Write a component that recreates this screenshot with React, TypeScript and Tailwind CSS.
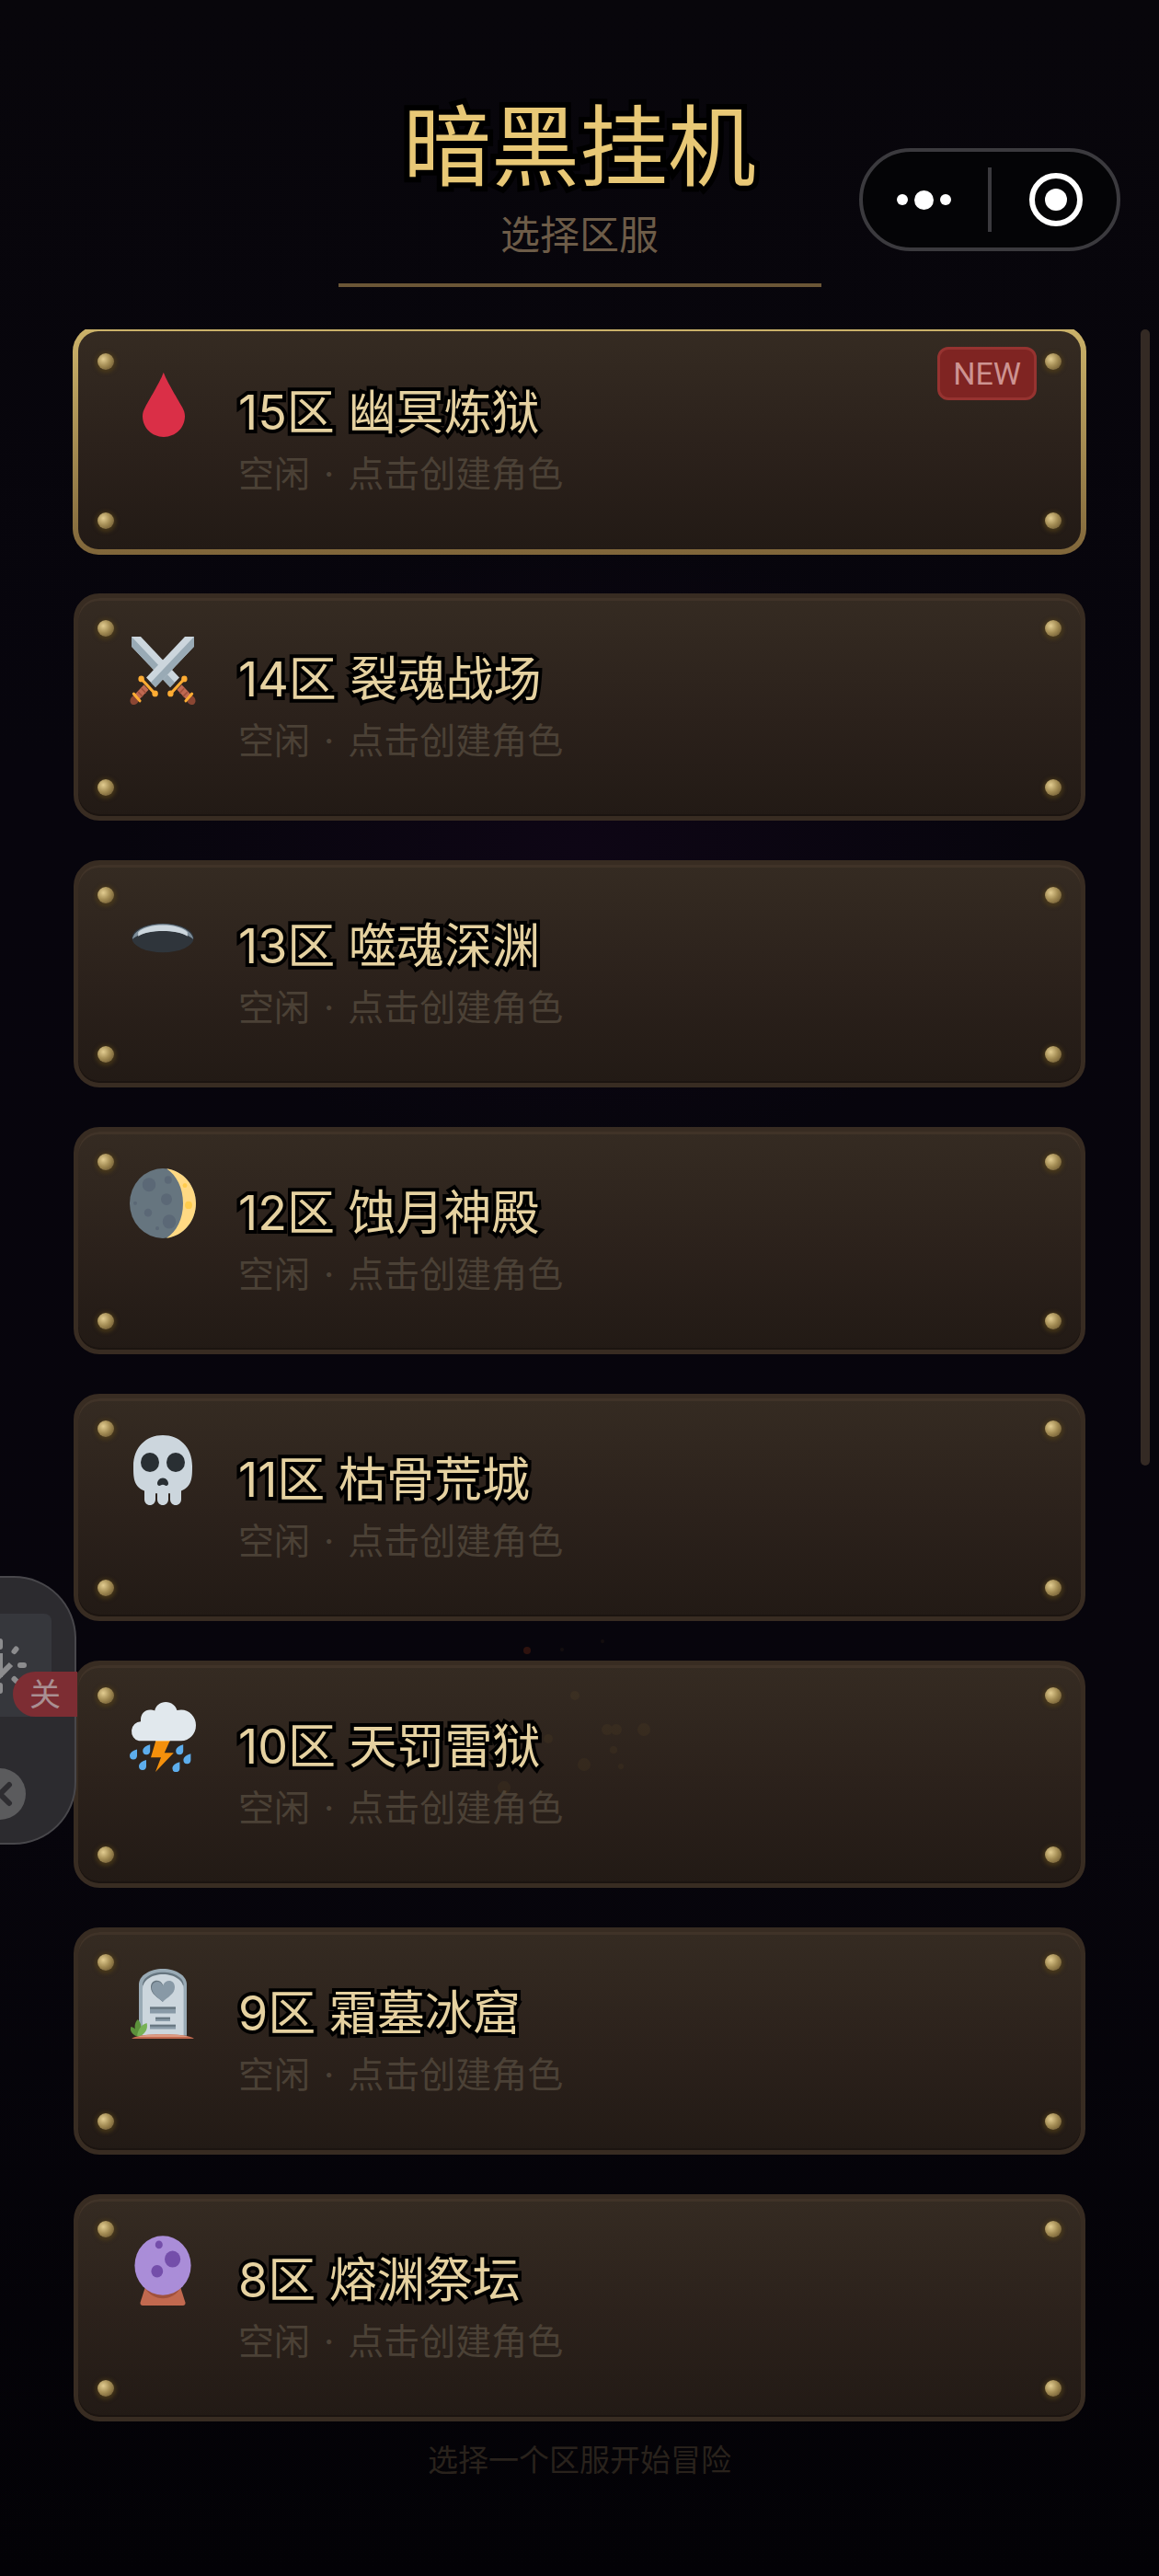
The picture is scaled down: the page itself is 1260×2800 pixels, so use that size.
import type { ReactNode } from "react";

function Emoji({ children }: { children: ReactNode }) {
  return (
    <svg
      viewBox="0 0 36 36"
      preserveAspectRatio="none"
      aria-hidden="true"
      className="mt-[40px] h-[76px] w-[72px] shrink-0"
    >
      {children}
    </svg>
  );
}

function BloodDrop() {
  return (
    <Emoji>
      <path
        fill="#DA2F47"
        d="M18.4 2.2C17.2 5.8 11.4 15 8.4 20.2 7.5 21.8 7 23.2 7 24.8c0 6 5 10.7 11.5 10.7S30 30.8 30 24.8c0-1.6-.5-3-1.4-4.6C25.5 15 19.6 5.8 18.4 2.2z"
      />
    </Emoji>
  );
}

function Swords() {
  return (
    <Emoji>
      <path fill="#CCD6DD" d="M1 1h5l21 21-5 5L1 6z" />
      <path fill="#99AAB5" d="M1 1v5l21 21 2.5-2.5z" />
      <path stroke="#BF6952" strokeWidth="3.6" d="M27 27l5.5 5.5" />
      <path stroke="#A0513C" strokeWidth=".8" d="M27.2 30l2.4-2.4M29 31.8l2.4-2.4" />
      <ellipse cx="33.4" cy="33.6" rx="2.2" ry="2.6" fill="#8A4633" transform="rotate(-40 33.4 33.6)" />
      <path stroke="#FFAC33" strokeWidth="1.5" strokeLinecap="round" d="M30.5 34l3.3-3.6M22.3 30.3l7.4-7.6" />
      <circle cx="22.2" cy="30.3" r="1.6" fill="#FFAC33" />
      <circle cx="29.7" cy="22.7" r="1.6" fill="#FFAC33" />
      <path fill="#CCD6DD" d="M35 1h-5L9 22l5 5L35 6z" />
      <path fill="#99AAB5" d="M35 1v5L14 27l-2.5-2.5z" />
      <path stroke="#BF6952" strokeWidth="3.6" d="M9 27l-5.5 5.5" />
      <path stroke="#A0513C" strokeWidth=".8" d="M8.8 30l-2.4-2.4M7 31.8l-2.4-2.4" />
      <ellipse cx="2.6" cy="33.6" rx="2.2" ry="2.6" fill="#8A4633" transform="rotate(40 2.6 33.6)" />
      <path stroke="#FFAC33" strokeWidth="1.5" strokeLinecap="round" d="M5.5 34l-3.3-3.6M13.7 30.3L6.3 22.7" />
      <circle cx="13.8" cy="30.3" r="1.6" fill="#FFAC33" />
      <circle cx="6.3" cy="22.7" r="1.6" fill="#FFAC33" />
    </Emoji>
  );
}

function Hole() {
  return (
    <Emoji>
      <ellipse cx="18" cy="18.7" rx="16.8" ry="7.5" fill="#2F353B" />
      <path fill="#7D8D99" d="M1.4 19.4C2 14.8 9.500 11.500 18 11.500s16 3.300 16.600 7.900C31 16.400 25 15.200 18 15.200S5 16.400 1.400 19.400z" />
      <path fill="#CCD6DD" d="M4.600 17.900v-2.200C7.500 13.300 12.300 12.100 18 12.100s10.500 1.200 13.400 3.600v2.200C28 15.900 23.300 15.200 18 15.200S8 15.900 4.600 17.900z" />
    </Emoji>
  );
}

function Moon() {
  return (
    <Emoji>
      <circle cx="18" cy="18" r="18" fill="#66757F" />
      <path fill="#FFD983" d="M20 .1C29.1 1.2 36 8.8 36 18s-6.9 16.8-16 17.9C25.5 32.5 29 26 29 18S25.5 3.5 20 .1z" />
      <g fill="#5B6876">
        <circle cx="10.5" cy="8.4" r="3.6" />
        <circle cx="20.9" cy="5.9" r="2" />
        <circle cx="20" cy="15.9" r="3" />
        <circle cx="3" cy="17.9" r="1" />
        <circle cx="10" cy="22.8" r="2.1" />
        <circle cx="21.5" cy="27.4" r="3.6" />
        <circle cx="15" cy="30.9" r="1" />
      </g>
      <circle cx="30" cy="8.8" r="1.2" fill="#FFCC4D" />
      <circle cx="32" cy="18.9" r="2" fill="#FFCC4D" />
    </Emoji>
  );
}

function Skull() {
  return (
    <Emoji>
      <path
        fill="#CCD6DD"
        d="M34 16C34 6 26.837 0 18 0 9.164 0 2 6 2 16c0 5.574.002 10.388 6 12.64V33c0 1.657 1.343 3 3 3s3-1.343 3-3v-3h1v3c0 1.657 1.344 3 3 3 1.657 0 3-1.343 3-3v-3h1v3c0 1.657 1.344 3 3 3 1.657 0 3-1.343 3-3v-4.36c5.998-2.252 6-7.066 6-12.64z"
      />
      <circle cx="11" cy="14" r="5" fill="#292F33" />
      <circle cx="25" cy="14" r="5" fill="#292F33" />
      <path fill="#292F33" d="M18 22c-1.9 0-3 1.5-3 2.9 0 .7.5 1.1 1.1 1.1.7 0 1.1-.5 1.9-.5s1.2.5 1.9.5c.6 0 1.1-.4 1.1-1.1 0-1.4-1.1-2.9-3-2.9z" />
    </Emoji>
  );
}

const rain = [
  "translate(2 27)",
  "translate(9.1 24.5)",
  "translate(7 32.5)",
  "translate(27.1 24.5)",
  "translate(31.2 29.3)",
  "translate(25.2 33.5)",
];

function Storm() {
  return (
    <Emoji>
      <path fill="#F4900C" d="M14.5 19L11.5 28.5H17L14 36l9.9-9.8h-5L22.3 19z" />
      <path fill="#FFAC33" d="M14.5 19l-.4 1.3h7.6l.6-1.3z" />
      <path
        fill="#E1E8ED"
        d="M28 4c-.8 0-1.6.1-2.3.3C25.1 1.9 22.6 0 19.6 0c-3 0-5.5 1.900-6 4.500C13 4.200 12 4 11 4 8.200 4 6 6.200 6 9v1.100A5 5 0 0 0 5 20h23a8 8 0 0 0 0-16z"
      />
      {rain.map((place) => (
        <path key={place} fill="#5DADEC" transform={place} d="M2-2.600C0-2.200-2-.9-2 .7A2 2 0 0 0 0 2.600C1.200 2.600 2 1.800 2 .7z" />
      ))}
    </Emoji>
  );
}

function Tombstone() {
  return (
    <Emoji>
      <path fill="#99AAB5" d="M5 8c0-4.5 6-8 13-8s13 3.5 13 8v26.5H5z" />
      <path fill="#66757F" d="M7 8.5C7 4.5 12 1.8 18.1 1.8S29.3 4.5 29.3 8.5z" />
      <path fill="#CCD6DD" d="M7 10.5C7 6 12 2.9 18.1 2.9S29.3 6 29.3 10.5v24H7z" />
      <path fill="#66757F" d="M18 8.2c-1.5-3.2-6.5-2.8-6.5 1.3C11.5 13 15.5 15 18 17z" />
      <path fill="#8899A6" d="M18 8.7c1.5-3.7 6.5-3.3 6.5.8 0 3.5-4 5.2-6.5 7.5-2.3-2-5.6-3.8-6-6.8-.4-3.8 4.5-5 6-1.5z" />
      <path fill="#8899A6" d="M11 19.7h14V23H11zM14 25h8v2h-8zM11 28.8h14V31H11z" />
      <path fill="#66757F" d="M11 19.7h14v1H11zM14 25h8v.9h-8zM11 28.8h14v.9H11z" />
      <path fill="#C1694F" d="M1 36c2-1.6 9-2.2 17-2.2s15 .6 17 2.2z" />
      <path fill="#DD9B83" d="M4 35c3-.9 8-1.2 14-1.2s11 .3 14 1.2z" />
      <path fill="#5C913B" d="M4 34.8C.8 33.5 0 31.5.7 29.8c1.3.3 1.9.7 2.3 1.3-.6-2 .2-4 1.4-5.1C6 27.5 6.5 29.5 6.2 31z" />
      <path fill="#77B255" d="M4 34.8c.3-3.5 2.5-6.2 5.3-6.8.9 3.2-1.4 6.6-5.3 6.8z" />
    </Emoji>
  );
}

function CrystalBall() {
  return (
    <Emoji>
      <path fill="#C1694F" d="M8.6 26L5.8 34.3C5.5 35.3 6.2 36 7 36h22c.8 0 1.5-.7 1.2-1.7L27.4 26z" />
      <path fill="#A0513C" d="M8.3 27C10.5 30.5 14 32.3 18 32.3s7.5-1.8 9.7-5.3l-.6-1.5H8.8z" />
      <circle cx="18" cy="15.4" r="15.3" fill="#AA8DD8" />
      <ellipse cx="15.9" cy="4.7" rx="2" ry="2.1" fill="#744EAA" />
      <circle cx="23.3" cy="12.1" r="4.3" fill="#744EAA" />
      <circle cx="14.9" cy="18.4" r="3.2" fill="#744EAA" />
    </Emoji>
  );
}

const servers = [
  { id: 15, name: "幽冥炼狱", icon: <BloodDrop />, fresh: true },
  { id: 14, name: "裂魂战场", icon: <Swords /> },
  { id: 13, name: "噬魂深渊", icon: <Hole /> },
  { id: 12, name: "蚀月神殿", icon: <Moon /> },
  { id: 11, name: "枯骨荒城", icon: <Skull /> },
  { id: 10, name: "天罚雷狱", icon: <Storm /> },
  { id: 9, name: "霜墓冰窟", icon: <Tombstone /> },
  { id: 8, name: "熔渊祭坛", icon: <CrystalBall /> },
];

const rivet =
  "absolute size-[18px] rounded-full bg-[radial-gradient(circle_at_35%_35%,#e2cc90_0%,#a48d55_45%,#5c4826_100%)] shadow-[0_1px_4px_2px_rgba(82,64,24,0.7)]";

function Rivets() {
  return (
    <>
      <span className={`${rivet} left-[21px] top-[24px]`} />
      <span className={`${rivet} right-[21px] top-[24px]`} />
      <span className={`${rivet} bottom-[22px] left-[21px]`} />
      <span className={`${rivet} bottom-[22px] right-[21px]`} />
    </>
  );
}

const plain =
  "border-[#382c22] [background:linear-gradient(#352b22,#2b211b_55%,#221a15)_padding-box,#382c22_border-box] shadow-[inset_0_3px_0_#403328,inset_0_-2px_0_#1b1410]";
const featured =
  "border-transparent [background:linear-gradient(#352b22,#2b211b_55%,#221a15)_padding-box,linear-gradient(#ccb36a,#80663a)_border-box]";

function ServerCard({ server }: { server: (typeof servers)[number] }) {
  return (
    <button
      type="button"
      className={`relative flex w-full items-start rounded-[28px] pb-[58px] pl-[56px] text-left ${
        server.fresh ? `border-[6px] ${featured}` : `border-[5px] ${plain}`
      }`}
    >
      <Rivets />
      {server.icon}
      <span className="ml-[46px] flex flex-col gap-[10px] pt-[57px]">
        <span className="text-[52px] leading-[64px] text-[#e5d1a0] [-webkit-text-stroke:8px_#000] [paint-order:stroke_fill]">
          {server.id}区 {server.name}
        </span>
        <span className="text-[39px] leading-[48px] text-[#4b4136]">
          空闲 <span className="mx-1">·</span> 点击创建角色
        </span>
      </span>
      {server.fresh && (
        <span className="absolute right-[48px] top-[17px] flex h-[58px] w-[108px] items-center justify-center rounded-[12px] border-[3px] border-[#963330] bg-[#7f2422] font-['Roboto',sans-serif] text-[34px] text-[#cd9391]">
          NEW
        </span>
      )}
    </button>
  );
}

function Capsule() {
  return (
    <div className="absolute right-[42px] top-[161px] flex h-[112px] w-[284px] items-center rounded-full border-4 border-[#3b3a3e] bg-[#040406]">
      <button type="button" aria-label="更多" className="flex flex-1 items-center justify-center gap-[7px] pr-1">
        <span className="size-[12px] rounded-full bg-white" />
        <span className="size-[21px] rounded-full bg-white" />
        <span className="size-[12px] rounded-full bg-white" />
      </button>
      <span className="h-[70px] w-1 bg-[#3b3a3e]" />
      <button type="button" aria-label="关闭" className="flex flex-1 items-center justify-center pl-1">
        <span className="flex size-[58px] items-center justify-center rounded-full border-[6px] border-white">
          <span className="size-[24px] rounded-full bg-white" />
        </span>
      </button>
    </div>
  );
}

function Embers() {
  return (
    <svg
      viewBox="0 0 200 200"
      aria-hidden="true"
      className="pointer-events-none absolute left-[540px] top-[1770px] size-[200px]"
    >
      <circle cx="33" cy="24" r="4" fill="#8c3214" opacity=".3" />
      <g fill="#8a6a2c" opacity=".09">
        <circle cx="71" cy="23" r="2" />
        <circle cx="115" cy="14" r="2" />
        <circle cx="85" cy="73" r="5" />
        <circle cx="120" cy="110" r="6" />
        <circle cx="130" cy="110" r="6" />
        <circle cx="160" cy="110" r="7" />
        <circle cx="95" cy="148" r="7" />
        <circle cx="127" cy="132" r="4" />
        <circle cx="135" cy="150" r="3" />
        <circle cx="56" cy="120" r="5" />
        <circle cx="8" cy="173" r="7" />
      </g>
    </svg>
  );
}

function SidePanel() {
  return (
    <aside className="absolute left-0 top-[1713px] h-[292px] w-[84px]">
      <div className="flex h-full w-[83px] flex-col items-start rounded-r-[68px] border-y-2 border-r-2 border-[#48474b] bg-[#2e2d31]/95 pt-[39px]">
        <button type="button" aria-label="下载" className="h-[112px] w-[56px] rounded-tr-[8px] bg-[#36373c]">
          <svg viewBox="0 0 56 112" className="h-full w-full" fill="none" stroke="#8c8c8e">
            <path strokeWidth="6" strokeLinecap="round" d="M22 56h4M15.500 41l2-2.500M15.500 71l2 2" />
            <path strokeWidth="6" strokeLinecap="round" d="M0 30v6M0 78v6" />
            <path strokeWidth="6" d="M0 43v26M12 55L-2 69" />
          </svg>
        </button>
        <button type="button" aria-label="收起" className="mt-[56px] h-[56px] w-[28px]">
          <svg viewBox="0 0 28 56" className="h-full w-full">
            <circle cx="0" cy="28" r="28" fill="#5b5b5d" />
            <path stroke="#2e2d31" strokeWidth="6" strokeLinecap="round" d="M0 28l10-10M0 28l10 10" />
          </svg>
        </button>
      </div>
      <button
        type="button"
        className="absolute right-0 top-[104px] flex h-[49px] w-[70px] items-center justify-center rounded-l-full bg-[#7d2d33] text-[34px] leading-none text-[#a98f92]"
      >
        关
      </button>
    </aside>
  );
}

export default function App() {
  return (
    <div className="relative min-h-screen bg-[#060409] bg-[radial-gradient(ellipse_40%_12%_at_50%_33%,#0e0615_0%,transparent_100%),linear-gradient(#08060b,#07050d_30%,#07050c_70%,#030206)] font-['Inter','Noto_Sans_CJK_SC',sans-serif]">
      <header className="flex flex-col items-center pt-[103px]">
        <h1 className="text-[96px] leading-[112px] text-[#e8c876] [-webkit-text-stroke:12px_#000] [paint-order:stroke_fill]">
          暗黑挂机
        </h1>
        <p className="mt-[12px] text-[43px] leading-[56px] text-[#6d5c48]">选择区服</p>
        <div className="mt-[25px] h-1 w-5/12 bg-[#6b5636]" />
      </header>
      <Capsule />

      <main className="relative mt-[46px]">
        <div className="overflow-hidden px-[80px]">
          <ul className="-mt-[3px] flex flex-col gap-[43px]">
            {servers.map((server) => (
              <li key={server.id} className={server.fresh ? "-m-px" : ""}>
                <ServerCard server={server} />
              </li>
            ))}
          </ul>
        </div>
        <div className="absolute right-[10px] top-0 h-[54.3%] w-[10px] rounded-full bg-[#342a24]" />
      </main>

      <footer className="pb-[96px] pt-[18px] text-center text-[33px] leading-[48px] text-[#29221c]">
        选择一个区服开始冒险
      </footer>
      <Embers />
      <SidePanel />
    </div>
  );
}
